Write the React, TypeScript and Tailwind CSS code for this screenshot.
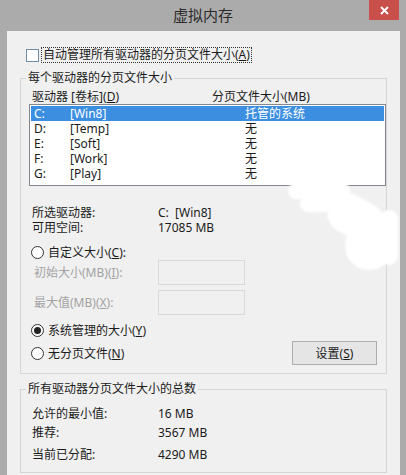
import React from "react";

const font = { fontFamily: '"Noto Sans", "Noto Sans CJK SC", sans-serif' };

function Radio({ checked }: { checked?: boolean }) {
  return (
    <span className="flex h-[13px] w-[13px] shrink-0 items-center justify-center rounded-full border border-[#333] bg-white">
      {checked && <span className="h-[7px] w-[7px] rounded-full bg-[#222]" />}
    </span>
  );
}

const drives = [
  { d: "C:", label: "[Win8]", size: "托管的系统", sel: true },
  { d: "D:", label: "[Temp]", size: "无" },
  { d: "E:", label: "[Soft]", size: "无" },
  { d: "F:", label: "[Work]", size: "无" },
  { d: "G:", label: "[Play]", size: "无" },
];

const totals = [
  { k: "允许的最小值:", v: "16 MB", mt: "mt-[9px]" },
  { k: "推荐:", v: "3567 MB", mt: "mt-[3px]" },
  { k: "当前已分配:", v: "4290 MB", mt: "mt-[6px]" },
];

export default function App() {
  return (
    <div
      className="relative flex h-[475px] w-[406px] flex-col overflow-hidden bg-[#ababab] text-[12px] leading-[15px] text-[#1b1b1b]"
      style={font}
    >
      {/* Title bar */}
      <div className="relative flex h-[31px] shrink-0 items-center justify-center">
        <span className="text-[15px] text-[#2b2b2b]">虚拟内存</span>
        <div className="absolute right-[7px] top-0 flex h-[20px] w-[30px] items-center justify-center bg-[#c9504a] text-white">
          <svg width="9" height="9" viewBox="0 0 9 9">
            <path d="M1 1 L8 8 M8 1 L1 8" stroke="white" strokeWidth="1.8" />
          </svg>
        </div>
      </div>

      {/* Client area */}
      <div className="ml-[7px] mr-[6px] flex flex-1 flex-col bg-[#f0f0f0] pt-[16px]">
        <div className="flex h-[16px] items-center pl-[19px]">
          <span className="h-[13px] w-[13px] border border-[#6f8fa8] bg-white" />
          <span className="ml-[2px] border border-dotted border-[#333] px-[1px] leading-[14px]">
            自动管理所有驱动器的分页文件大小(<u>A</u>)
          </span>
        </div>

        {/* Per-drive group */}
        <fieldset className="ml-[13px] mr-[13px] mt-[8px] border border-[#d5d5d5] pb-[8px]">
          <legend className="ml-[5px] px-[2px] leading-[14px]">每个驱动器的分页文件大小</legend>
          <div className="mt-[4px] flex h-[14px] items-center pl-[11px]">
            <span className="w-[180px]">
              驱动器 [卷标](<u>D</u>)
            </span>
            <span>分页文件大小(MB)</span>
          </div>
          <div className="ml-[8px] mt-[1px] h-[82px] w-[357px] border border-[#828790] bg-white px-[1px] pt-[1px]">
            {drives.map((r) => (
              <div
                key={r.d}
                className={`flex h-[15px] items-center pl-[3px] ${r.sel ? "bg-[#3c8fe0] text-white" : ""}`}
              >
                <span className="w-[36px]">{r.d}</span>
                <span className="w-[175px]">{r.label}</span>
                <span>{r.size}</span>
              </div>
            ))}
          </div>

          <div className="mt-[19px] flex h-[15px] items-center pl-[11px]">
            <span className="w-[126px]">所选驱动器:</span>
            <span>C:&nbsp;&nbsp;[Win8]</span>
          </div>
          <div className="flex h-[15px] items-center pl-[11px]">
            <span className="w-[126px]">可用空间:</span>
            <span>17085 MB</span>
          </div>

          <div className="mt-[9px] flex h-[16px] items-center gap-[4px] pl-[10px]">
            <Radio />
            <span>
              自定义大小(<u>C</u>):
            </span>
          </div>
          <div className="flex h-[25px] items-center pl-[13px] text-[#a3a3a3]">
            <span className="w-[124px]">
              初始大小(MB)(<u>I</u>):
            </span>
            <span className="h-[25px] w-[87px] border border-[#d9d9d9] bg-[#f0f0f0]" />
          </div>
          <div className="mt-[5px] flex h-[25px] items-center pl-[13px] text-[#a3a3a3]">
            <span className="w-[124px]">
              最大值(MB)(<u>X</u>):
            </span>
            <span className="h-[25px] w-[87px] border border-[#d9d9d9] bg-[#f0f0f0]" />
          </div>

          <div className="mt-[7px] flex h-[16px] items-center gap-[4px] pl-[10px]">
            <Radio checked />
            <span>
              系统管理的大小(<u>Y</u>)
            </span>
          </div>
          <div className="mt-[3px] flex h-[24px] items-center pl-[10px] pr-[9px]">
            <Radio />
            <span className="ml-[4px]">
              无分页文件(<u>N</u>)
            </span>
            <button className="ml-auto flex h-[24px] w-[85px] items-center justify-center border border-[#adadad] bg-[#e5e5e5]">
              设置(<u>S</u>)
            </button>
          </div>
        </fieldset>

        {/* Totals group */}
        <fieldset className="ml-[13px] mr-[13px] mt-[8px] border border-[#d5d5d5] pb-[10px]">
          <legend className="ml-[5px] px-[2px] leading-[14px]">所有驱动器分页文件大小的总数</legend>
          {totals.map((t) => (
            <div key={t.k} className={`flex h-[16px] items-center pl-[11px] ${t.mt}`}>
              <span className="w-[126px]">{t.k}</span>
              <span>{t.v}</span>
            </div>
          ))}
        </fieldset>
      </div>

      {/* White smudges in the screenshot */}
      <div className="pointer-events-none absolute left-[288px] top-[183px] h-[16px] w-[62px] rounded-full bg-white blur-[1px]" />
      <div className="pointer-events-none absolute left-[300px] top-[196px] h-[16px] w-[42px] rounded-full bg-white blur-[1px]" />
      <div className="pointer-events-none absolute left-[326px] top-[198px] h-[40px] w-[60px] rotate-[30deg] rounded-full bg-white blur-[1px]" />
      <div className="pointer-events-none absolute left-[345px] top-[222px] h-[48px] w-[48px] rounded-full bg-white blur-[1px]" />
      <div className="pointer-events-none absolute left-[380px] top-[210px] h-[55px] w-[18px] rounded-full bg-white blur-[1px]" />
    </div>
  );
}
